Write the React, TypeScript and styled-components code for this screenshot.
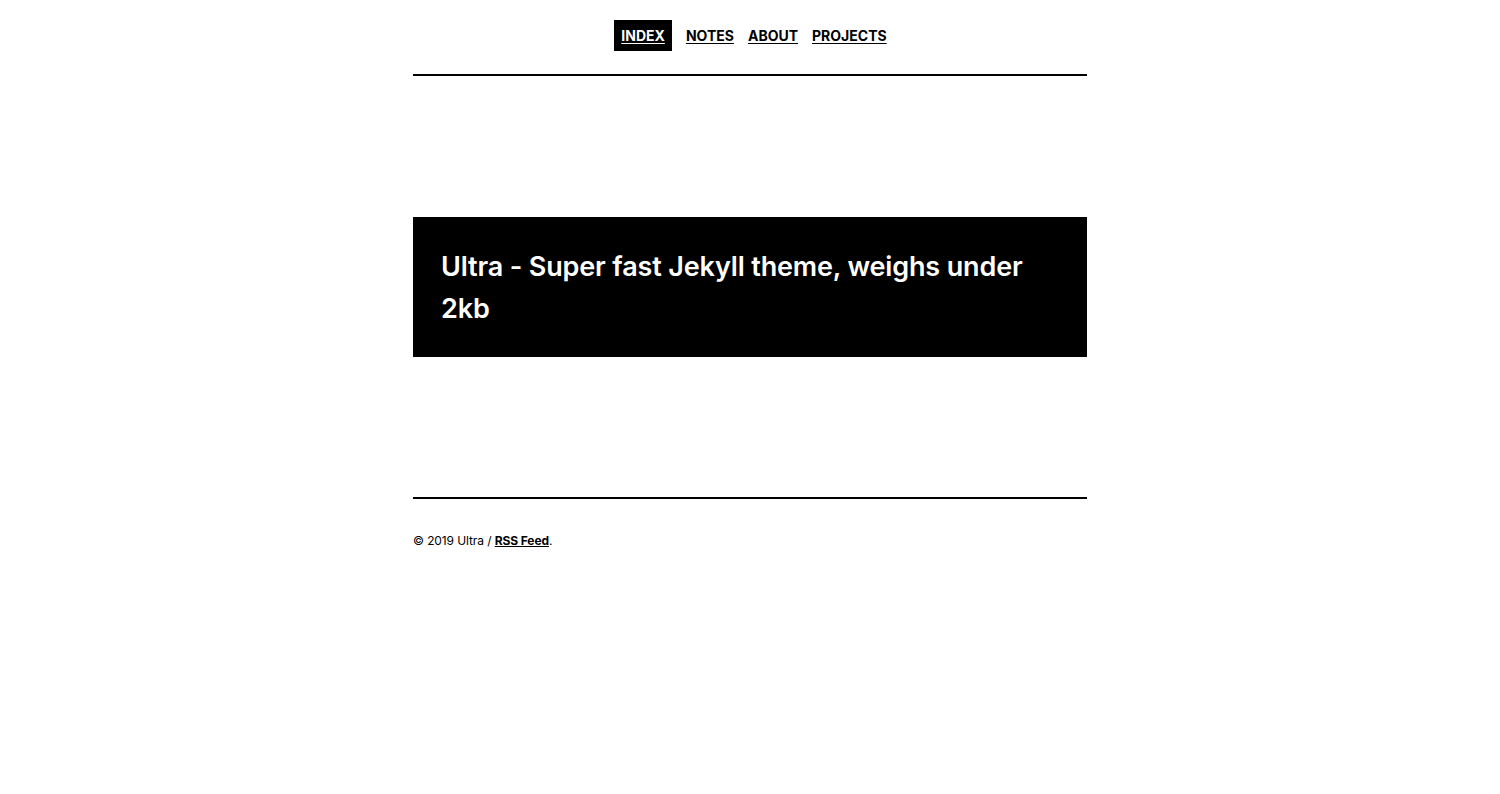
import React from 'react'
import styled, { createGlobalStyle } from 'styled-components'

const GlobalStyle = createGlobalStyle`
  html, body {
    margin: 0;
    padding: 0;
    background: #fff;
    color: #000;
    font-family: Inter, "Noto Sans", sans-serif;
  }
`

const Page = styled.div`
  width: 674px;
  margin: 0 auto;
`

const Header = styled.header`
  padding-top: 20px;
  padding-bottom: 23px;
  border-bottom: 2px solid #000;
`

const Nav = styled.nav`
  display: flex;
  justify-content: center;
  padding-left: 8px;
`

const NavLink = styled.a<{ $active?: boolean }>`
  display: block;
  padding: 0 7px;
  height: 31px;
  line-height: 32px;
  margin-right: ${p => (p.$active ? '7px' : '0')};
  font-size: 14px;
  font-weight: 700;
  text-transform: uppercase;
  text-decoration: underline;
  text-underline-offset: 2px;
  color: ${p => (p.$active ? '#fff' : '#000')};
  background: ${p => (p.$active ? '#000' : 'transparent')};
  cursor: pointer;
`

const Main = styled.main`
  padding: 141px 0 140px;
  border-bottom: 2px solid #000;
`

const Card = styled.article`
  background: #000;
  color: #fff;
  padding: 29px 28px 27px;
`

const Title = styled.h1`
  margin: 0;
  font-size: 27px;
  line-height: 42px;
  font-weight: 600;
  letter-spacing: -0.15px;
`

const Footer = styled.footer`
  padding-top: 34px;
  font-size: 12px;
  line-height: 16px;
  letter-spacing: -0.1px;
`

const FooterLink = styled.a`
  color: #000;
  font-weight: 700;
  text-decoration: underline;
`

const links = ['Index', 'Notes', 'About', 'Projects']

export default function App() {
  return (
    <>
      <GlobalStyle />
      <Page>
        <Header>
          <Nav>
            {links.map((l, i) => (
              <NavLink key={l} $active={i === 0}>{l}</NavLink>
            ))}
          </Nav>
        </Header>
        <Main>
          <Card>
            <Title>Ultra - Super fast Jekyll theme, weighs under 2kb</Title>
          </Card>
        </Main>
        <Footer>
          © 2019 Ultra / <FooterLink>RSS Feed</FooterLink>.
        </Footer>
      </Page>
    </>
  )
}
